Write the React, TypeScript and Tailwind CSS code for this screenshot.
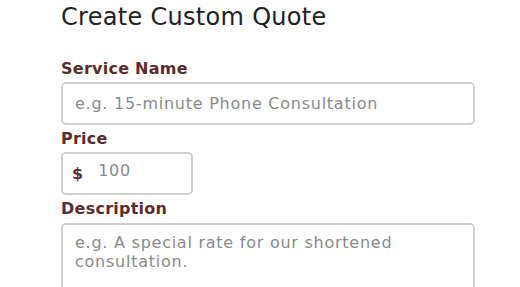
export default function App() {
    return (
        <div
            className="h-[287px] overflow-hidden bg-white pl-[61px] pt-[2px]"
            style={{ fontFamily: '"DejaVu Sans", "Noto Sans", sans-serif' }}
        >
            <div className="w-[414px]">
                <h2 className="text-[24px] leading-[30px] tracking-[0.3px] text-[#222222]">Create Custom Quote</h2>

                <div className="mt-[26px] flex flex-col">
                    <label className="text-[16px] font-bold leading-[22px] tracking-[0.25px] text-[#5a2d2d]">Service Name</label>
                    <input
                        className="mt-[2px] h-[43px] w-full rounded-[5px] border-2 border-[#cfcfcf] px-[12px] text-[16px] tracking-[0.75px] text-[#444] outline-none placeholder:text-[#8a8a8a]"
                        placeholder="e.g. 15-minute Phone Consultation"
                    />

                    <label className="mt-[3px] text-[16px] font-bold leading-[22px] tracking-[0.25px] text-[#5a2d2d]">Price</label>
                    <div className="mt-[2px] flex h-[43px] w-[132px] items-center rounded-[5px] border-2 border-[#cfcfcf] pl-[9px]">
                        <span className="text-[16px] font-bold text-[#5a2d2d]">$</span>
                        <input
                            className="ml-[15px] w-[80px] -translate-y-[3px] text-[16px] tracking-[0.75px] text-[#444] outline-none placeholder:text-[#8a8a8a]"
                            placeholder="100"
                        />
                    </div>

                    <label className="mt-[3px] text-[16px] font-bold leading-[22px] tracking-[0.25px] text-[#5a2d2d]">Description</label>
                    <textarea
                        className="mt-[3px] h-[90px] w-full resize-none rounded-[5px] border-2 border-[#cfcfcf] px-[12px] pt-[8px] text-[16px] leading-[19px] tracking-[0.75px] text-[#444] outline-none placeholder:text-[#8a8a8a]"
                        placeholder="e.g. A special rate for our shortened consultation."
                    />
                </div>
            </div>
        </div>
    );
}
